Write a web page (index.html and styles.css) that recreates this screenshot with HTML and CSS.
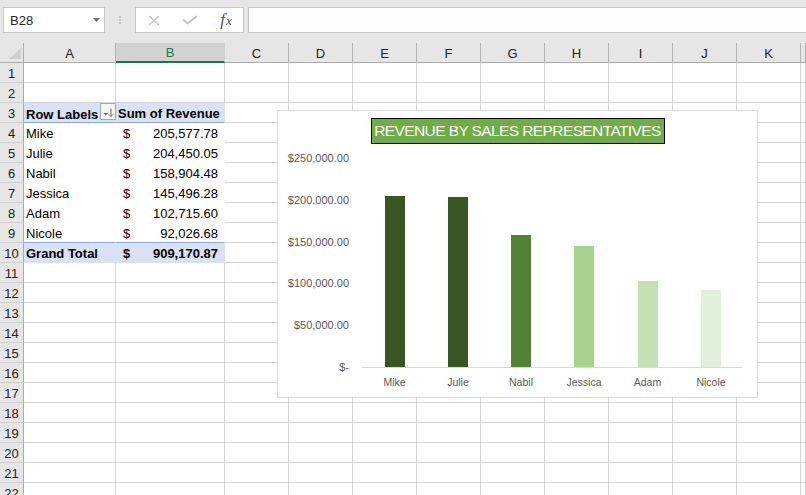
FILE: index.html
```html
<!DOCTYPE html>
<html lang="en">
<head>
<meta charset="utf-8">
<title>Revenue by Sales Representatives</title>
<link rel="stylesheet" href="styles.css">
</head>
<body>
<div class="app">
  <div class="toolbar">
    <div class="namebox"><span>B28</span><svg class="dd" width="7" height="4" viewBox="0 0 7 4"><polygon points="0,0 7,0 3.5,4"/></svg></div>
    <div class="grip"><i></i><i></i><i></i></div>
    <div class="fxbox">
      <span class="fxslot"><svg width="12" height="11" viewBox="0 0 12 11"><path d="M1 1 L11 10 M11 1 L1 10" class="ico"/></svg></span>
      <span class="fxslot"><svg width="16" height="10" viewBox="0 0 16 10"><path d="M1 4.5 L5.5 8.5 L15 1" class="ico ico-ok"/></svg></span>
      <span class="fxslot fx"><span class="fx-f">f</span><span class="fx-x">x</span></span>
    </div>
    <div class="formula"></div>
  </div>

  <div class="sheet">
    <div class="row hdr">
      <div class="corner"><svg width="12" height="11" viewBox="0 0 12 11"><polygon points="12,0 12,11 0,11"/></svg></div>
      <div class="ch">A</div><div class="ch sel">B</div><div class="ch">C</div><div class="ch">D</div><div class="ch">E</div><div class="ch">F</div><div class="ch">G</div><div class="ch">H</div><div class="ch">I</div><div class="ch">J</div><div class="ch">K</div><div class="ch"></div>
    </div>

    <div class="row"><div class="rh">1</div><div class="c"></div><div class="c"></div><div class="c"></div><div class="c"></div><div class="c"></div><div class="c"></div><div class="c"></div><div class="c"></div><div class="c"></div><div class="c"></div><div class="c"></div><div class="c"></div></div>
    <div class="row"><div class="rh">2</div><div class="c"></div><div class="c"></div><div class="c"></div><div class="c"></div><div class="c"></div><div class="c"></div><div class="c"></div><div class="c"></div><div class="c"></div><div class="c"></div><div class="c"></div><div class="c"></div></div>
    <div class="row"><div class="rh">3</div>
      <div class="c pv pv-head pv-label"><span>Row Labels</span><span class="filter"><svg width="14" height="15" viewBox="0 0 14 15"><polygon points="2.5,9 7,9 4.75,11.5" class="fil"/><path d="M10 4.5 V12.5 M8 10.5 L10 12.5 L12 10.5" class="arr"/></svg></span></div>
      <div class="c pv pv-head">Sum of Revenue</div>
      <div class="c"></div><div class="c"></div><div class="c"></div><div class="c"></div><div class="c"></div><div class="c"></div><div class="c"></div><div class="c"></div><div class="c"></div><div class="c"></div></div>
    <div class="row"><div class="rh">4</div><div class="c pv">Mike</div><div class="c pv pv-num"><span>$</span><span>205,577.78</span></div><div class="c"></div><div class="c"></div><div class="c"></div><div class="c"></div><div class="c"></div><div class="c"></div><div class="c"></div><div class="c"></div><div class="c"></div><div class="c"></div></div>
    <div class="row"><div class="rh">5</div><div class="c pv">Julie</div><div class="c pv pv-num"><span>$</span><span>204,450.05</span></div><div class="c"></div><div class="c"></div><div class="c"></div><div class="c"></div><div class="c"></div><div class="c"></div><div class="c"></div><div class="c"></div><div class="c"></div><div class="c"></div></div>
    <div class="row"><div class="rh">6</div><div class="c pv">Nabil</div><div class="c pv pv-num"><span>$</span><span>158,904.48</span></div><div class="c"></div><div class="c"></div><div class="c"></div><div class="c"></div><div class="c"></div><div class="c"></div><div class="c"></div><div class="c"></div><div class="c"></div><div class="c"></div></div>
    <div class="row"><div class="rh">7</div><div class="c pv">Jessica</div><div class="c pv pv-num"><span>$</span><span>145,496.28</span></div><div class="c"></div><div class="c"></div><div class="c"></div><div class="c"></div><div class="c"></div><div class="c"></div><div class="c"></div><div class="c"></div><div class="c"></div><div class="c"></div></div>
    <div class="row"><div class="rh">8</div><div class="c pv">Adam</div><div class="c pv pv-num"><span>$</span><span>102,715.60</span></div><div class="c"></div><div class="c"></div><div class="c"></div><div class="c"></div><div class="c"></div><div class="c"></div><div class="c"></div><div class="c"></div><div class="c"></div><div class="c"></div></div>
    <div class="row"><div class="rh">9</div><div class="c pv pv-end">Nicole</div><div class="c pv pv-end pv-num"><span>$</span><span>92,026.68</span></div><div class="c"></div><div class="c"></div><div class="c"></div><div class="c"></div><div class="c"></div><div class="c"></div><div class="c"></div><div class="c"></div><div class="c"></div><div class="c"></div></div>
    <div class="row"><div class="rh">10</div><div class="c pv pv-total">Grand Total</div><div class="c pv pv-total pv-num"><span>$</span><span>909,170.87</span></div><div class="c"></div><div class="c"></div><div class="c"></div><div class="c"></div><div class="c"></div><div class="c"></div><div class="c"></div><div class="c"></div><div class="c"></div><div class="c"></div></div>
    <div class="row"><div class="rh">11</div><div class="c"></div><div class="c"></div><div class="c"></div><div class="c"></div><div class="c"></div><div class="c"></div><div class="c"></div><div class="c"></div><div class="c"></div><div class="c"></div><div class="c"></div><div class="c"></div></div>
    <div class="row"><div class="rh">12</div><div class="c"></div><div class="c"></div><div class="c"></div><div class="c"></div><div class="c"></div><div class="c"></div><div class="c"></div><div class="c"></div><div class="c"></div><div class="c"></div><div class="c"></div><div class="c"></div></div>
    <div class="row"><div class="rh">13</div><div class="c"></div><div class="c"></div><div class="c"></div><div class="c"></div><div class="c"></div><div class="c"></div><div class="c"></div><div class="c"></div><div class="c"></div><div class="c"></div><div class="c"></div><div class="c"></div></div>
    <div class="row"><div class="rh">14</div><div class="c"></div><div class="c"></div><div class="c"></div><div class="c"></div><div class="c"></div><div class="c"></div><div class="c"></div><div class="c"></div><div class="c"></div><div class="c"></div><div class="c"></div><div class="c"></div></div>
    <div class="row"><div class="rh">15</div><div class="c"></div><div class="c"></div><div class="c"></div><div class="c"></div><div class="c"></div><div class="c"></div><div class="c"></div><div class="c"></div><div class="c"></div><div class="c"></div><div class="c"></div><div class="c"></div></div>
    <div class="row"><div class="rh">16</div><div class="c"></div><div class="c"></div><div class="c"></div><div class="c"></div><div class="c"></div><div class="c"></div><div class="c"></div><div class="c"></div><div class="c"></div><div class="c"></div><div class="c"></div><div class="c"></div></div>
    <div class="row"><div class="rh">17</div><div class="c"></div><div class="c"></div><div class="c"></div><div class="c"></div><div class="c"></div><div class="c"></div><div class="c"></div><div class="c"></div><div class="c"></div><div class="c"></div><div class="c"></div><div class="c"></div></div>
    <div class="row"><div class="rh">18</div><div class="c"></div><div class="c"></div><div class="c"></div><div class="c"></div><div class="c"></div><div class="c"></div><div class="c"></div><div class="c"></div><div class="c"></div><div class="c"></div><div class="c"></div><div class="c"></div></div>
    <div class="row"><div class="rh">19</div><div class="c"></div><div class="c"></div><div class="c"></div><div class="c"></div><div class="c"></div><div class="c"></div><div class="c"></div><div class="c"></div><div class="c"></div><div class="c"></div><div class="c"></div><div class="c"></div></div>
    <div class="row"><div class="rh">20</div><div class="c"></div><div class="c"></div><div class="c"></div><div class="c"></div><div class="c"></div><div class="c"></div><div class="c"></div><div class="c"></div><div class="c"></div><div class="c"></div><div class="c"></div><div class="c"></div></div>
    <div class="row"><div class="rh">21</div><div class="c"></div><div class="c"></div><div class="c"></div><div class="c"></div><div class="c"></div><div class="c"></div><div class="c"></div><div class="c"></div><div class="c"></div><div class="c"></div><div class="c"></div><div class="c"></div></div>
    <div class="row"><div class="rh">22</div><div class="c"></div><div class="c"></div><div class="c"></div><div class="c"></div><div class="c"></div><div class="c"></div><div class="c"></div><div class="c"></div><div class="c"></div><div class="c"></div><div class="c"></div><div class="c"></div></div>
  </div>

  <div class="chart">
    <div class="chart-title">REVENUE BY SALES REPRESENTATIVES</div>
    <svg class="plot" width="479" height="252" viewBox="0 0 479 252">
      <g class="ylab">
        <text x="71" y="14.3">$250,000.00</text>
        <text x="71" y="56">$200,000.00</text>
        <text x="71" y="97.7">$150,000.00</text>
        <text x="71" y="139.3">$100,000.00</text>
        <text x="71" y="181">$50,000.00</text>
        <text x="71" y="222.7">$-</text>
      </g>
      <rect x="107" y="52" width="20" height="171" fill="#375623"/>
      <rect x="170" y="53" width="20" height="170" fill="#375623"/>
      <rect x="233" y="91" width="20" height="132" fill="#548235"/>
      <rect x="296" y="102" width="20" height="121" fill="#a9d18e"/>
      <rect x="360" y="137" width="20" height="86" fill="#c5e0b4"/>
      <rect x="423" y="146" width="20" height="77" fill="#e2efda"/>
      <line x1="84" y1="223.5" x2="464" y2="223.5" class="axis"/>
      <g class="xlab">
        <text x="116.5" y="238">Mike</text>
        <text x="180" y="238">Julie</text>
        <text x="243" y="238">Nabil</text>
        <text x="306" y="238">Jessica</text>
        <text x="369.5" y="238">Adam</text>
        <text x="433" y="238">Nicole</text>
      </g>
    </svg>
  </div>
</div>
</body>
</html>
```

FILE: styles.css
```css
* { box-sizing: border-box; }

html, body {
  margin: 0;
  padding: 0;
  width: 806px;
  height: 495px;
  overflow: hidden;
  background: #ffffff;
  font-family: "Liberation Sans", Arial, sans-serif;
  color: #000;
}

.app {
  position: relative;
  width: 806px;
  height: 495px;
  overflow: hidden;
}

/* ---------- formula bar ---------- */
.toolbar {
  display: flex;
  align-items: flex-start;
  height: 43px;
  padding: 7px 0 0 3px;
  background: #e6e6e6;
}

.namebox {
  display: flex;
  align-items: center;
  justify-content: space-between;
  width: 102px;
  height: 26px;
  padding: 0 4px 0 6px;
  background: #ffffff;
  border: 1px solid #c6c6c6;
  font-size: 13px;
  color: #262626;
}

.namebox .dd polygon { fill: #707070; }

.grip {
  display: flex;
  flex-direction: column;
  align-items: center;
  justify-content: center;
  gap: 1px;
  width: 30px;
  height: 26px;
}

.grip i {
  display: block;
  width: 2px;
  height: 2px;
  background: #c3c3c3;
}

.fxbox {
  display: grid;
  grid-template-columns: repeat(3, 36px);
  align-items: center;
  justify-items: center;
  width: 109px;
  height: 26px;
  background: #ffffff;
  border: 1px solid #c6c6c6;
}

.fxslot {
  display: flex;
  align-items: center;
  justify-content: center;
  height: 24px;
}

.ico {
  fill: none;
  stroke: #c4c4c4;
  stroke-width: 1.3;
}

.ico-ok { stroke-width: 2; }

.fx {
  font-family: "Liberation Serif", "Times New Roman", serif;
  font-style: italic;
  color: #4d4d4d;
  align-items: baseline;
  padding-top: 2px;
}

.fx-f { font-size: 17px; }
.fx-x { font-size: 13px; margin-left: 1px; }

.formula {
  flex: 1;
  height: 26px;
  margin-left: 4px;
  background: #fdfdfd;
  border: 1px solid #c6c6c6;
  border-right: none;
}

/* ---------- sheet grid ---------- */
.sheet {
  display: flex;
  flex-direction: column;
}

.row {
  display: grid;
  grid-template-columns: 24px 92px 109px repeat(9, 64px) 1fr;
  height: 20px;
  font-size: 13px;
}

.hdr { background: #e6e6e6; }

.corner {
  display: flex;
  align-items: flex-end;
  justify-content: flex-end;
  padding: 0 2px 3px 0;
  border-right: 1px solid #ababab;
  border-bottom: 1px solid #ababab;
}

.corner polygon { fill: #cfcfcf; }

.ch {
  display: flex;
  align-items: center;
  justify-content: center;
  color: #222;
  border-right: 1px solid #b4b4b4;
  border-bottom: 1px solid #ababab;
  padding-top: 1px;
}

.ch.sel {
  background: #d2d2d2;
  color: #217346;
  border-right-color: #d2d2d2;
  border-bottom: 2px solid #217346;
}

.rh {
  display: flex;
  align-items: center;
  justify-content: center;
  background: #e6e6e6;
  color: #222;
  border-right: 1px solid #ababab;
  border-bottom: 1px solid #cfcfcf;
  padding-top: 1px;
}

.c {
  display: flex;
  align-items: center;
  padding: 1px 2px 0 2px;
  background: #ffffff;
  border-right: 1px solid #d4d4d4;
  border-bottom: 1px solid #d4d4d4;
  white-space: nowrap;
  overflow: hidden;
}

/* ---------- pivot table ---------- */
.pv {
  border-right-color: transparent;
  border-bottom-color: transparent;
}

.pv-head {
  background: #d9e1f2;
  font-weight: bold;
  border-bottom-color: #8ea9db;
}

.pv-label {
  justify-content: space-between;
  align-items: flex-start;
  padding-top: 0;
  padding-right: 0;
  overflow: visible;
}

.pv-label > span:first-child {
  margin-top: 4px;
}

.filter {
  display: flex;
  width: 16px;
  height: 17px;
  margin-right: -1px;
  background: #f4f4f4;
  border: 1px solid #a9a9a9;
}

.filter .fil { fill: #6a6a6a; }
.filter .arr { fill: none; stroke: #6a6a6a; stroke-width: 1; }

.pv-end { border-bottom-color: #8ea9db; }

.pv-total {
  background: #d9e1f2;
  font-weight: bold;
}

.pv-num {
  justify-content: space-between;
  padding-left: 7px;
  padding-right: 6px;
}

/* ---------- chart ---------- */
.chart {
  position: absolute;
  left: 277px;
  top: 110px;
  width: 481px;
  height: 288px;
  display: flex;
  flex-direction: column;
  align-items: center;
  background: #ffffff;
  border: 1px solid #d9d9d9;
}

.chart-title {
  display: flex;
  align-items: center;
  justify-content: center;
  width: 294px;
  height: 26px;
  margin-top: 7px;
  background: #70ad47;
  border: 1px solid #000000;
  color: #ffffff;
  font-size: 15.5px;
  letter-spacing: -0.6px;
  white-space: nowrap;
}

.plot {
  display: block;
  align-self: flex-start;
}

.plot text {
  font-family: "Liberation Sans", Arial, sans-serif;
  fill: #595959;
  dominant-baseline: central;
}

.ylab text {
  font-size: 11px;
  text-anchor: end;
}

.xlab text {
  font-size: 10.5px;
  text-anchor: middle;
}

.axis {
  stroke: #d9d9d9;
  stroke-width: 1;
}
```
